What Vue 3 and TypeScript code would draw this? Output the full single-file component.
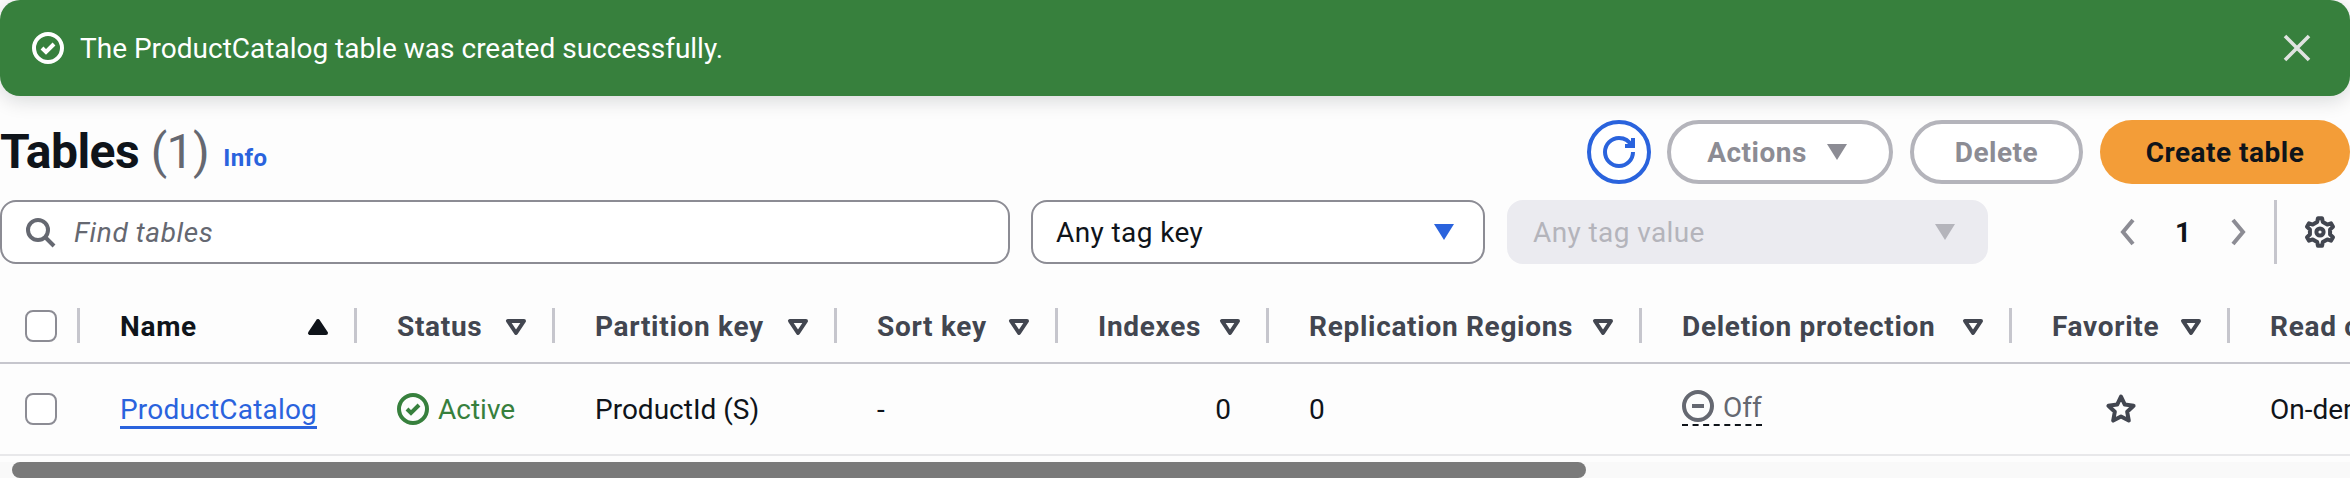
<template>
  <div class="page">
    <div class="flash">
      <svg class="ico32" viewBox="0 0 16 16"><circle cx="8" cy="8" r="7" /><path d="M5 8l2 2 4-4" /></svg>
      <span class="flash-text">The ProductCatalog table was created successfully.</span>
      <svg class="flash-close" viewBox="0 0 16 16"><path d="M2 2l12 12M14 2L2 14" /></svg>
    </div>

    <div class="head">
      <h1 class="title">Tables <span class="count">(1)</span></h1>
      <a class="info">Info</a>
      <div class="actions">
        <button type="button" class="refresh">
          <svg class="ico32" viewBox="0 0 16 16"><path d="M15 8c0 3.870-3.130 7-7 7s-7-3.130-7-7 3.130-7 7-7c2.790 0 5.200 1.630 6.330 4" /><path d="M15 1v4h-4" /></svg>
        </button>
        <button type="button" class="btn btn-actions">Actions
          <svg class="caret" viewBox="0 0 16 16"><path d="M3 4h10l-5 8z" /></svg>
        </button>
        <button type="button" class="btn btn-delete">Delete</button>
        <button type="button" class="btn-primary">Create table</button>
      </div>
    </div>

    <div class="filters">
      <div class="field search">
        <svg class="ico32 search-ico" viewBox="0 0 16 16"><circle cx="7" cy="7" r="5" /><path d="M10.500 10.500L15 15" /></svg>
        <span>Find tables</span>
      </div>
      <div class="field tag-key">
        <span>Any tag key</span>
        <svg class="caret" viewBox="0 0 16 16"><path d="M3 4h10l-5 8z" /></svg>
      </div>
      <div class="field tag-value">
        <span>Any tag value</span>
        <svg class="caret" viewBox="0 0 16 16"><path d="M3 4h10l-5 8z" /></svg>
      </div>
      <div class="pager">
        <svg class="ico32 pager-arrow" viewBox="0 0 16 16"><path d="M10.500 2L5.500 8l5 6" /></svg>
        <span class="page-no">1</span>
        <svg class="ico32 pager-arrow" viewBox="0 0 16 16"><path d="M5.500 2l5 6-5 6" /></svg>
      </div>
      <div class="gear-wrap">
        <svg class="ico32 gear" viewBox="0 0 16 16">
          <path :d="gearPath" />
          <circle cx="8" cy="8" r="1.800" />
        </svg>
      </div>
    </div>

    <div class="table">
      <div class="tr thead">
        <div class="th th-check"><span class="check" /></div>
        <div
          v-for="col in columns"
          :key="col.label"
          class="th"
          :class="{ sorted: col.sorted }"
        >
          <span class="th-label">{{ col.label }}</span>
          <svg v-if="col.sorted" class="sort" viewBox="0 0 16 16"><path d="M4 11h8L8 5z" /></svg>
          <svg v-else-if="col.filter" class="sort" viewBox="0 0 16 16"><path d="M4 5h8l-4 6z" /></svg>
        </div>
      </div>
      <div class="tr tbody">
        <div class="td td-check"><span class="check" /></div>
        <div class="td"><a class="link">ProductCatalog</a></div>
        <div class="td status">
          <svg class="ico32" viewBox="0 0 16 16"><circle cx="8" cy="8" r="7" /><path d="M5 8l2 2 4-4" /></svg>
          <span>Active</span>
        </div>
        <div class="td">ProductId (S)</div>
        <div class="td">-</div>
        <div class="td num">0</div>
        <div class="td">0</div>
        <div class="td">
          <span class="off">
            <svg class="ico32" viewBox="0 0 16 16"><circle cx="8" cy="8" r="7" /><path d="M11 8H5" /></svg>
            <span class="off-label">Off</span>
          </span>
        </div>
        <div class="td fav">
          <svg class="ico32" viewBox="0 0 16 16"><path d="M8 1.800l1.900 4 4.400.6-3.200 3 .8 4.400L8 11.700l-3.900 2.100.8-4.400-3.200-3 4.400-.6z" /></svg>
        </div>
        <div class="td">On-demand</div>
      </div>
    </div>

    <div class="scrolltrack"><div class="scrollthumb" /></div>
  </div>
</template>

<script setup lang="ts">
interface Column { label: string; sorted?: boolean; filter?: boolean }

const columns: Column[] = [
  { label: 'Name', sorted: true },
  { label: 'Status', filter: true },
  { label: 'Partition key', filter: true },
  { label: 'Sort key', filter: true },
  { label: 'Indexes', filter: true },
  { label: 'Replication Regions', filter: true },
  { label: 'Deletion protection', filter: true },
  { label: 'Favorite', filter: true },
  { label: 'Read capacity mode', filter: true },
]

// outline of the settings cog: six lobes, one pointing straight up
function cog(teeth: number, outer: number, inner: number): string {
  const pts: string[] = []
  const step = (Math.PI * 2) / teeth
  for (let i = 0; i < teeth; i++) {
    const a = i * step - Math.PI / 2
    const w = step * 0.2
    for (const [r, t] of [[inner, a - w * 1.3], [outer, a - w * 0.7], [outer, a + w * 0.7], [inner, a + w * 1.3]]) {
      pts.push(`${(8 + r * Math.cos(t)).toFixed(2)} ${(8 + r * Math.sin(t)).toFixed(2)}`)
    }
  }
  return `M${pts.join('L')}Z`
}
const gearPath = cog(6, 7, 5.2)
</script>

<style>
html, body { margin: 0; background: #fdfdfd; }
</style>

<style scoped>
.page {
  width: 2350px; height: 478px; overflow: hidden;
  background: #fdfdfd; color: #0f141a;
  font-family: Roboto, "Noto Sans", sans-serif; font-size: 28px;
}
.ico32 { width: 32px; height: 32px; flex: none; fill: none; stroke: currentColor; stroke-width: 2; }

.flash {
  height: 96px; box-sizing: border-box; padding: 0 20px 0 32px;
  display: flex; align-items: center; gap: 16px;
  background: #37803d; color: #fff; border-radius: 20px;
  box-shadow: 0 4px 20px rgba(15, 20, 26, .16);
}
.flash-text { flex: 1; }
.flash-close { width: 32px; height: 32px; fill: none; stroke: #dfe3e0; stroke-width: 1.800; margin-right: 17px; }

.head { display: flex; align-items: center; height: 64px; margin-top: 24px; }
.title { margin: 0; font-size: 48px; font-weight: 700; line-height: 64px; letter-spacing: -.5px; }
.count { font-weight: 400; color: #656871; }
.info { margin: 12px 0 0 14px; font-size: 24px; font-weight: 700; color: #2a63dd; letter-spacing: .4px; }
.actions { margin-left: auto; display: flex; gap: 17px; }
.refresh {
  width: 64px; height: 64px; padding: 0; margin-right: -1px; border: 4px solid #2a63dd; border-radius: 50%;
  background: #fff; color: #2a63dd; display: flex; align-items: center; justify-content: center;
}
.btn, .btn-primary {
  height: 64px; box-sizing: border-box; border-radius: 32px;
  font: 700 28px Roboto, "Noto Sans", sans-serif; letter-spacing: .5px;
  display: flex; align-items: center; justify-content: center; padding: 0;
}
.btn { background: #fff; border: 4px solid #b4b4bb; color: #8c8c94; }
.btn-actions { width: 226px; gap: 14px; }
.btn-delete { width: 173px; }
.btn-primary { width: 250px; background: #f39d38; border: 0; color: #0f141a; }
.caret { width: 32px; height: 32px; fill: currentColor; flex: none; }

.filters { display: flex; align-items: center; height: 64px; margin-top: 16px; }
.field {
  height: 64px; box-sizing: border-box; border-radius: 16px; letter-spacing: .4px;
  display: flex; align-items: center; background: #fff; border: 2px solid #8c8c94;
}
.search { width: 1010px; padding-left: 22px; gap: 18px; color: #656871; font-style: italic; letter-spacing: .6px; }
.search-ico { font-style: normal; }
.tag-key { width: 454px; margin-left: 21px; padding: 0 23px 0 23px; justify-content: space-between; }
.tag-key .caret { color: #2a63dd; }
.tag-value {
  width: 481px; margin-left: 22px; padding: 0 25px 0 24px; justify-content: space-between;
  background: #ebebf0; border-color: #ebebf0; color: #b4b4bb;
}
.pager { display: flex; align-items: center; margin-left: 124px; color: #8c8c94; }
.pager-arrow { width: 32px; height: 32px; }
.page-no { width: 78px; text-align: center; color: #0f141a; font-weight: 700; }
.gear-wrap {
  height: 64px; margin-left: 20px; padding-left: 27px; border-left: 3px solid #c6c6cd;
  display: flex; align-items: center;
}
.gear { color: #424650; stroke-linejoin: round; }

.table { margin-top: 44px; width: 2350px; }
.tr { display: grid; grid-template-columns: 80px 277px 198px 282px 221px 211px 373px 370px 218px 400px; }
.thead { padding-bottom: 19px; border-bottom: 2px solid #c6c6cd; }
.tbody { height: 90px; border-bottom: 2px solid #e8e8ea; align-items: center; white-space: nowrap; }
.th {
  height: 35px; box-sizing: border-box; padding: 2px 20px 0 40px;
  border-right: 3px solid #c6c6cd;
  display: flex; align-items: center; justify-content: space-between;
  font-weight: 700; color: #424650; white-space: nowrap; letter-spacing: .7px;
}
.th:last-child { border-right: 0; }
.th.sorted { color: #0f141a; }
.th-check { padding: 0 0 0 25px; }
.check {
  display: block; width: 32px; height: 32px; box-sizing: border-box;
  border: 2px solid #8c8c94; border-radius: 8px; background: #fff;
}
.sort { width: 32px; height: 32px; flex: none; fill: none; stroke: #424650; stroke-width: 2; stroke-linejoin: round; }
.sorted .sort { fill: #0f141a; stroke: #0f141a; }

.td { padding-left: 40px; min-width: 0; }
.td-check { padding-left: 25px; }
.link { color: #2a63dd; border-bottom: 3px solid #2a63dd; letter-spacing: .2px; }
.status { display: flex; align-items: center; gap: 9px; color: #37803d; }
.num { text-align: right; padding-right: 38px; }
.off {
  display: inline-flex; align-items: center; gap: 9px; color: #656871;
  border-bottom: 2px dashed #0f141a;
}
.off-label { padding-top: 2px; }
.fav { padding-left: 93px; color: #424650; display: flex; }
.fav svg { stroke-linejoin: round; }

.scrolltrack { height: 16px; margin-top: 6px; padding-left: 12px; background: #f9f9f9; }
.scrollthumb { width: 1574px; height: 16px; border-radius: 8px; background: #7a7a7a; }
</style>
